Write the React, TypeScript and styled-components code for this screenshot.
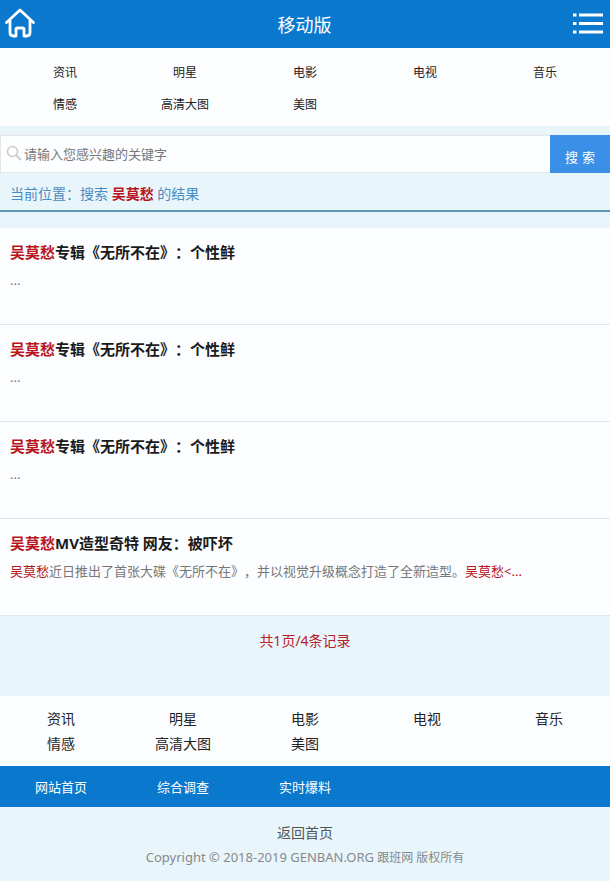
import React from "react";
import styled, { createGlobalStyle } from "styled-components";

const Global = createGlobalStyle`
  html, body { margin: 0; padding: 0; }
  body {
    background: #e8f6fc;
    font-family: "Noto Sans", "Noto Sans CJK SC", sans-serif;
    color: #333;
    text-spacing-trim: space-all;
  }
  * { box-sizing: border-box; }
`;

const Page = styled.div`
  width: 610px;
  height: 881px;
  overflow: hidden;
`;

const Header = styled.header`
  height: 48px;
  background: #0a78cd;
  display: flex;
  align-items: center;
  justify-content: space-between;
  padding: 0 7px 0 4px;
`;

const HeaderIcon = styled.svg`
  display: block;
  flex: none;
`;

const Title = styled.h1`
  margin: 0;
  font-size: 18px;
  font-weight: 400;
  color: #fff;
`;

const CategoryGrid = styled.nav<{ $rowHeight: number; $size: number; $pt: number; $pb: number; $px: number }>`
  display: grid;
  grid-template-columns: repeat(5, 1fr);
  grid-auto-rows: ${(p) => p.$rowHeight}px;
  padding: ${(p) => p.$pt}px ${(p) => p.$px}px ${(p) => p.$pb}px;
  background: #fcfdff;
  font-size: ${(p) => p.$size}px;
`;

const Category = styled.a`
  display: flex;
  align-items: center;
  justify-content: center;
  color: #222;
`;

const SearchBar = styled.form`
  display: flex;
  height: 38px;
  margin-top: 9px;
`;

const InputWrap = styled.div`
  flex: 1;
  display: flex;
  align-items: center;
  gap: 2px;
  padding: 0 0 2px 5px;
  background: #fdfeff;
  border: 1px solid #e4e6e6;
  border-right: 0;
  font-size: 13px;
  color: #777;
`;

const SearchButton = styled.div`
  width: 60px;
  display: flex;
  align-items: center;
  justify-content: center;
  padding: 4px 0 0 4px;
  background: #3b8fe6;
  color: #fff;
  font-size: 13px;
  letter-spacing: 4px;
`;

const Crumb = styled.div`
  height: 39px;
  display: flex;
  align-items: center;
  padding: 2px 10px 0;
  border-bottom: 2px solid #5a9ab8;
  font-size: 14px;
  color: #4a8cc0;
  white-space: pre;
`;

const Keyword = styled.b`
  color: #b8141c;
  font-weight: 700;
`;

const ResultList = styled.ul`
  list-style: none;
  margin: 16px 0 0;
  padding: 0;
  background: #fcfdff;
`;

const Result = styled.li`
  height: 97px;
  padding: 13px 10px 0;
  border-bottom: 1px solid #e2e6e8;
`;

const ResultTitle = styled.h2`
  margin: 0;
  font-size: 15px;
  line-height: 22px;
  font-weight: 700;
  color: #1a1a1a;
`;

const ResultText = styled.p`
  margin: 7px 0 0;
  font-size: 13px;
  line-height: 20px;
  color: #777;
  white-space: nowrap;
`;

const Mark = styled.span`
  color: #b8141c;
`;

const Pager = styled.div`
  height: 80px;
  padding-top: 15px;
  text-align: center;
  font-size: 14px;
  line-height: 20px;
  color: #b8202a;
`;

const BlueBar = styled.div`
  height: 41px;
  display: grid;
  grid-template-columns: repeat(5, 20%);
  align-items: center;
  background: #0a78cd;
  color: #fff;
  font-size: 13px;
  text-align: center;
`;

const Footer = styled.footer`
  padding-top: 16px;
  text-align: center;
`;

const BackHome = styled.div`
  font-size: 14px;
  line-height: 20px;
  color: #555;
`;

const Copyright = styled.div`
  margin-top: 4px;
  font-size: 12px;
  line-height: 20px;
  color: #888;
`;

const CopyrightLatin = styled.span`
  font-size: 13px;
`;

const top = ["资讯", "明星", "电影", "电视", "音乐", "情感", "高清大图", "美图"];

const results = [
  { title: "专辑《无所不在》：个性鲜", text: <>...</> },
  { title: "专辑《无所不在》：个性鲜", text: <>...</> },
  { title: "专辑《无所不在》：个性鲜", text: <>...</> },
  {
    title: "MV造型奇特 网友：被吓坏",
    text: (
      <>
        <Mark>吴莫愁</Mark>近日推出了首张大碟《无所不在》，并以视觉升级概念打造了全新造型。<Mark>吴莫愁&lt;...</Mark>
      </>
    ),
  },
];

export default function App() {
  return (
    <Page>
      <Global />
      <Header>
        <HeaderIcon width="32" height="32" viewBox="0 0 32 32" fill="none" stroke="#fff" strokeWidth="2.8" strokeLinejoin="round" strokeLinecap="round">
          <path d="M2.5 14.5 L16 2 L29.5 14.5 M6 12 V24.5 Q6 28 9.5 28 H12 V21.5 Q12 20 13.5 20 H18.5 Q20 20 20 21.5 V28 H22.5 Q26 28 26 24.5 V12" />
        </HeaderIcon>
        <Title>移动版</Title>
        <HeaderIcon width="30" height="48" viewBox="0 0 30 48" fill="#fff">
          <rect x="0" y="13.5" width="3.5" height="3" />
          <rect x="6" y="13.5" width="24" height="3" />
          <rect x="0" y="22" width="3.5" height="3" />
          <rect x="6" y="22" width="24" height="3" />
          <rect x="0" y="30.5" width="3.5" height="3" />
          <rect x="6" y="30.5" width="24" height="3" />
        </HeaderIcon>
      </Header>
      <CategoryGrid $rowHeight={32} $size={12} $pt={8} $pb={6} $px={5}>
        {top.map((t) => (
          <Category key={t}>{t}</Category>
        ))}
      </CategoryGrid>
      <SearchBar>
        <InputWrap>
          <svg width="16" height="16" viewBox="0 0 16 16" fill="none" stroke="#ccc" strokeWidth="1.6">
            <circle cx="6.5" cy="6.5" r="5" />
            <path d="M10.5 10.5 L15 15" strokeWidth="2.2" />
          </svg>
          请输入您感兴趣的关键字
        </InputWrap>
        <SearchButton>搜索</SearchButton>
      </SearchBar>
      <Crumb>
        当前位置：搜索 <Keyword>吴莫愁</Keyword> 的结果
      </Crumb>
      <ResultList>
        {results.map((r, i) => (
          <Result key={i}>
            <ResultTitle>
              <Mark>吴莫愁</Mark>
              {r.title}
            </ResultTitle>
            <ResultText>{r.text}</ResultText>
          </Result>
        ))}
      </ResultList>
      <Pager>共1页/4条记录</Pager>
      <CategoryGrid $rowHeight={25} $size={14} $pt={9} $pb={11} $px={0}>
        {top.map((t) => (
          <Category key={t}>{t}</Category>
        ))}
      </CategoryGrid>
      <BlueBar>
        <span>网站首页</span>
        <span>综合调查</span>
        <span>实时爆料</span>
      </BlueBar>
      <Footer>
        <BackHome>返回首页</BackHome>
        <Copyright>
          <CopyrightLatin>Copyright © 2018-2019 GENBAN.ORG</CopyrightLatin> 跟班网 版权所有
        </Copyright>
      </Footer>
    </Page>
  );
}
